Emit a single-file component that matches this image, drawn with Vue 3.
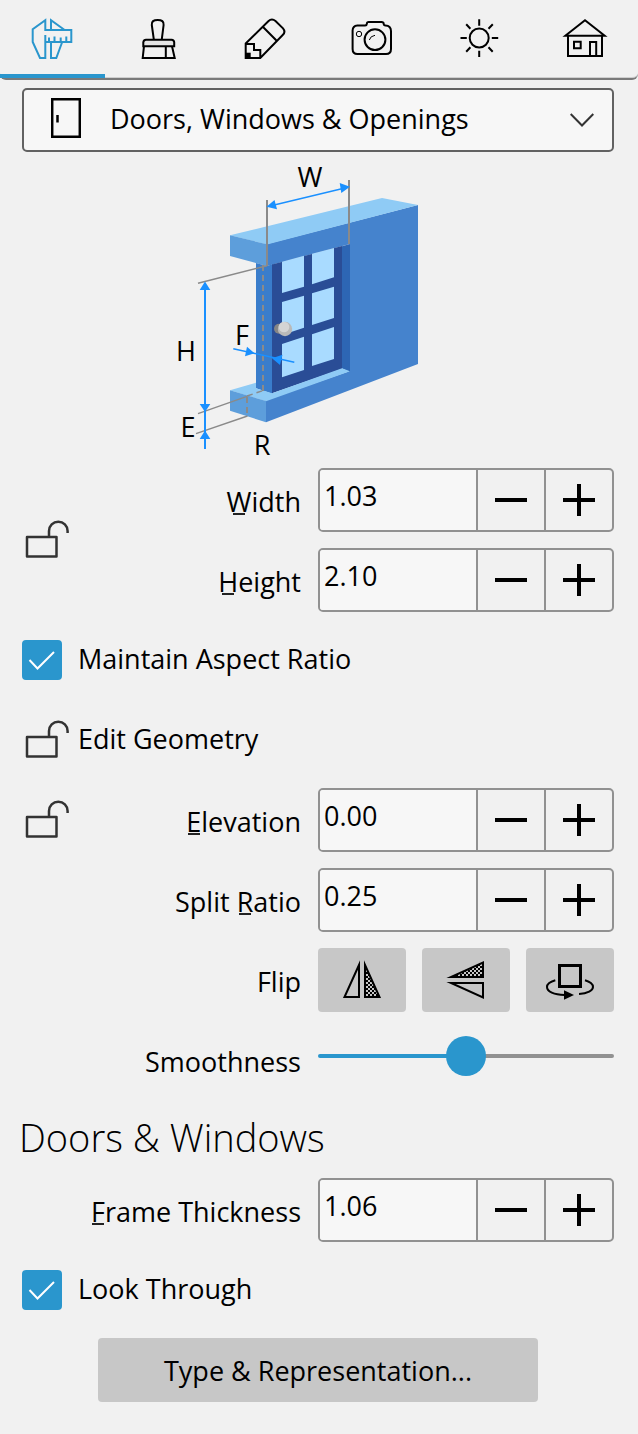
<script setup>
import { ref } from 'vue'

const tabs = ['Dimensions', 'Materials', 'Edit', 'Camera', 'Light', 'Building']
const active = ref(0)
const category = ref('Doors, Windows & Openings')
const maintainRatio = ref(true)
const lookThrough = ref(true)
const smoothness = ref(50)

const groups = ref([
  {
    name: 'size',
    lock: true,
    fields: [
      { id: 'width', pre: '', key: 'W', post: 'idth', value: '1.03' },
      { id: 'height', pre: '', key: 'H', post: 'eight', value: '2.10' },
    ],
  },
  {
    name: 'place',
    lock: true,
    fields: [
      { id: 'elevation', pre: '', key: 'E', post: 'levation', value: '0.00' },
      { id: 'split', pre: 'Split ', key: 'R', post: 'atio', value: '0.25' },
    ],
  },
  {
    name: 'frame',
    lock: false,
    fields: [{ id: 'frame', pre: '', key: 'F', post: 'rame Thickness', value: '1.06' }],
  },
])

function step(field, amount) {
  field.value = (Number(field.value) + amount).toFixed(2)
}
</script>

<template>
  <main class="panel">
    <nav class="tabs">
      <button
        v-for="(tab, i) in tabs"
        :key="tab"
        class="tab"
        :class="{ active: active === i }"
        :aria-label="tab"
        @click="active = i"
      >
        <svg class="tab-icon" viewBox="0 0 48 48" aria-hidden="true">
          <g v-if="i === 0">
            <path d="M16.3 20V43H11L3.7 27V14.3L16.3 5.3V15H42.3V27H16.3M22 15V5.3L35.3 14.7M22 27V43H27.3L33 27.5M20 27V22.5M25.5 27V21.5M31.7 27V22.5M37.3 27V21.5" />
          </g>
          <g v-else-if="i === 1">
            <path fill="#e4e4e4" d="M8.3 31.2V27.2Q8.8 24.8 11 24.8H36.5Q39 25 39.2 27.2V31.2Z" />
            <path d="M18.8 24.3L16.8 10C16.4 6.5 18.6 4.9 22.7 4.9S29 6.5 28.6 10L26.8 24.3M9 31.2L7.7 43H39.7L37 31.2M30.8 31.2V43" />
          </g>
          <g v-else-if="i === 2">
            <path d="M3.7 28.5L26.3 6.2Q29.8 3 33.5 6L41 13.4Q44 17 40.7 20L18.3 43H3.7ZM21.3 12.3L34.7 25.7M3.7 29H12V35H18.3V43" />
            <path class="solid" d="M3.7 37.7H8.7V43H3.7Z" />
          </g>
          <g v-else-if="i === 3">
            <path d="M9.3 10.6H17Q18.8 10.4 18.9 8.6T21 7H33.5Q35.6 7 35.7 8.8T37.5 10.6Q42.8 10.8 43 16V34Q43 39 38 39H9.5Q4.6 39 4.6 34V15.5Q4.8 11 9.3 10.6Z" />
            <circle cx="27" cy="24.7" r="10.4" />
            <circle class="fine" cx="11" cy="19" r="2.7" />
            <path class="fine" d="M21.3 25Q22.3 21 27 20.3" />
          </g>
          <g v-else-if="i === 4">
            <circle cx="25.2" cy="23" r="9.5" />
            <path d="M25.2 4.3V10.7M25.2 35.7V42M6.5 23H12.8M37.8 23H44.2M12.2 9.3L16.4 13.7M38.8 9.3L34.5 13.7M12.2 36.7L16.4 32.3M38.7 36.7L34.5 32.3" />
          </g>
          <g v-else>
            <path d="M4.3 20.7L24 5.2L43.7 20.7ZM7 20.7V41H41V20.7M13 26.7H19.7V33.3H13ZM29 41V27H35.2V41" />
          </g>
        </svg>
      </button>
    </nav>

    <div class="content">
      <div class="category">
        <select v-model="category" aria-label="Object category">
          <option>Doors, Windows &amp; Openings</option>
        </select>
        <svg class="door" viewBox="0 0 30 40" aria-hidden="true"><path d="M1.2 1.2H28.8V38.8H1.2ZM6.5 17V24.5" /></svg>
        <svg class="chevron" viewBox="0 0 24 14" aria-hidden="true"><path d="M.7 1L12 12.5L23.3 1" /></svg>
      </div>

      <svg class="diagram" viewBox="160 152 316 316" role="img" aria-label="Window dimensions">
        <path fill="#4583cd" d="M267 244L418 205V364L266 422.3V400L350 371V244L267 266Z" />
        <path fill="#8fcbf5" d="M230 235.3L382 198L418 205L267 244.5Z" />
        <path fill="#5d9edb" d="M230 235.3L267 244.3V266L230 256Z" />
        <path fill="#3a7dcb" d="M256 263L267 266L273 264V394L256 388.3Z" />
        <path fill="#2a4d96" d="M272 264.5L342 246V369L272 393.3Z" />
        <path fill="#2d66b4" d="M342 246.2L350 244V372L342 368.5Z" />
        <path fill="#a9dbff" d="M282 261.7L304 255.8V286.7L282 293ZM312 253.7L334 248V277.3L312 284.3ZM282 302L304 295.7V327.7L282 335ZM312 293.3L334 286.7V318L312 325ZM282 344L304 336.7V370L282 377.3ZM312 334.3L334 327V359L312 366Z" />
        <path fill="#8fcbf5" d="M230 390.3L256 382.7V388.3L272 393.3L342 368.3L350 371.3L266 401.2Z" />
        <path fill="#5d9edb" d="M230 390.3L266 401V422.3L230 410.7Z" />

        <g class="guide">
          <path d="M267 200V266M349 180V244" />
          <path class="thin" d="M198 283.3L267 265.7M198 413.7L247 396.3M196 433.7L247.5 416" />
          <path class="dashed" d="M263 265V391M247 397V416" />
          <path class="dashed thin" d="M247 396L263 390.5" />
        </g>

        <g class="arrow">
          <path d="M205 285V449" />
          <path class="thin" d="M270 206L347 187.5M233.3 348.7L294.3 362.3" />
          <path class="head" d="M205 281.5L210.3 290H199.7ZM205 412L210.3 404H199.7ZM205 430.5L210.3 439H199.7ZM266.5 206.8L274.5 200L277 209.3ZM350 186.7L339.7 183L341.3 193ZM254.5 353.3L247 346.7L245 356.3ZM272 358.3L282.5 354.7L280 365Z" />
        </g>

        <circle cx="279" cy="328.7" r="5" fill="#858585" />
        <circle cx="285" cy="329" r="7.2" fill="#b9b9b9" />
        <circle cx="284" cy="327" r="5.3" fill="#d4d4d4" />

        <g class="letters">
          <text x="310" y="187">W</text>
          <text x="186" y="361">H</text>
          <text x="242" y="345">F</text>
          <text x="188" y="437">E</text>
          <text x="262" y="455">R</text>
        </g>
      </svg>

      <template v-for="group in groups" :key="group.name">
        <h2 v-if="group.name === 'frame'" class="heading">Doors &amp; Windows</h2>

        <section class="group">
          <div class="rows">
            <div v-for="field in group.fields" :key="field.id" class="row">
              <label class="label" :for="field.id">{{ field.pre }}<span class="key">{{ field.key }}</span>{{ field.post }}</label>
              <div class="stepper">
                <input :id="field.id" v-model="field.value" type="text" inputmode="decimal" />
                <button :aria-label="'Decrease ' + field.id" @click="step(field, -0.01)">
                  <svg viewBox="0 0 32 32" aria-hidden="true"><path d="M0 16H32" /></svg>
                </button>
                <button :aria-label="'Increase ' + field.id" @click="step(field, 0.01)">
                  <svg viewBox="0 0 32 32" aria-hidden="true"><path d="M0 16H32M16 0V32" /></svg>
                </button>
              </div>
            </div>
          </div>
          <button v-if="group.lock" class="lock" :class="{ both: group.name === 'size' }" :aria-label="'Lock ' + group.name">
            <svg viewBox="0 0 48 48" aria-hidden="true"><path d="M5 21H34.5V40.5H5ZM27 21V15A9.3 9.3 0 0 1 45.6 15V17" /></svg>
          </button>
        </section>

        <template v-if="group.name === 'size'">
          <label class="check">
            <span class="box">
              <input v-model="maintainRatio" type="checkbox" />
              <svg v-if="maintainRatio" viewBox="0 0 40 40" aria-hidden="true"><path d="M7.5 20L15.5 28.5L32 12" /></svg>
            </span>
            <span class="check-text">Maintain Aspect Ratio</span>
          </label>
          <button class="geometry">
            <svg viewBox="0 0 48 48" aria-hidden="true"><path d="M5 21H34.5V40.5H5ZM27 21V15A9.3 9.3 0 0 1 45.6 15V17" /></svg>
            <span class="check-text">Edit Geometry</span>
          </button>
        </template>

        <template v-if="group.name === 'place'">
          <div class="row">
            <span class="label">Flip</span>
            <div class="flips">
              <button aria-label="Flip horizontally">
                <svg class="flip" viewBox="0 0 40 40" aria-hidden="true">
                  <defs>
                    <pattern id="checker" width="4" height="4" patternUnits="userSpaceOnUse">
                      <path class="solid" d="M0 0H2V2H0ZM2 2H4V4H2Z" />
                    </pattern>
                  </defs>
                  <path d="M17 5V37H2.5Z" />
                  <path class="checked" d="M23 5V37H37.5Z" />
                </svg>
              </button>
              <button aria-label="Flip vertically">
                <svg class="flip" viewBox="0 0 40 40" aria-hidden="true">
                  <path d="M5 23H37V37.5Z" />
                  <path class="checked" d="M5 17H37V2.5Z" />
                </svg>
              </button>
              <button aria-label="Rotate">
                <svg class="rotate" viewBox="0 0 56 40" aria-hidden="true">
                  <path class="square" d="M17.5 5.5H38.5V26.5H17.5Z" />
                  <path d="M13.3 20.3C8 21.8 5 24.2 5 27C5 31.6 12 34.7 22.5 35M43 20.3C48 21.8 51 24 51 27C51 30.3 45.5 33.5 37 34" />
                  <path class="solid" d="M22 30.3L32 35L22 39.8Z" />
                </svg>
              </button>
            </div>
          </div>
          <div class="row">
            <label class="label" for="smoothness">Smoothness</label>
            <div class="slider">
              <input id="smoothness" v-model="smoothness" type="range" min="0" max="100" :style="{ '--fill': smoothness + '%' }" />
            </div>
          </div>
        </template>
      </template>

      <label class="check">
        <span class="box">
          <input v-model="lookThrough" type="checkbox" />
          <svg v-if="lookThrough" viewBox="0 0 40 40" aria-hidden="true"><path d="M7.5 20L15.5 28.5L32 12" /></svg>
        </span>
        <span class="check-text">Look Through</span>
      </label>

      <button class="wide">Type &amp; Representation...</button>
    </div>
  </main>
</template>

<style>
body {
  background: #f1f1f1;
}
</style>

<style scoped>
.panel,
.panel * {
  box-sizing: border-box;
}
.panel {
  color: #000;
  font-family: "Open Sans", "Noto Sans", sans-serif;
  font-size: 27px;
  line-height: 36px;
}
button,
input,
select {
  margin: 0;
  padding: 0;
  border: 0;
  border-radius: 0;
  background: none;
  color: inherit;
  font: inherit;
}
svg {
  display: block;
  fill: none;
  stroke: #000;
  stroke-width: 2;
}
.tabs {
  display: grid;
  grid-template-columns: repeat(6, 1fr);
  height: 80px;
  border-bottom: 2px solid #7a7a7a;
  border-radius: 0 0 6px 6px;
  box-shadow: inset 0 -1px #cfcfcf;
}
.tab {
  display: grid;
  place-items: center;
  height: 78px;
}
.tab.active {
  position: relative;
}
.tab.active::after {
  content: "";
  position: absolute;
  left: 0;
  right: 1px;
  bottom: 0;
  height: 4px;
  background: #2a96cd;
}
.tab-icon {
  width: 48px;
  height: 48px;
}
.tab.active .tab-icon {
  stroke: #2a96cd;
}
.tab-icon .fine {
  stroke-width: 1;
}
.solid {
  fill: #000;
  stroke: none;
}
.content {
  display: flex;
  flex-direction: column;
  gap: 16px;
  padding: 8px 24px 32px 22px;
}
.category {
  position: relative;
}
.category select {
  display: block;
  appearance: none;
  width: 100%;
  height: 64px;
  padding: 0 60px 2px 86px;
  border: 2px solid #626262;
  border-radius: 5px;
  background: #f7f7f7;
}
.door,
.chevron {
  position: absolute;
  pointer-events: none;
}
.door {
  left: 29px;
  top: 10px;
  width: 30px;
  height: 40px;
  stroke-width: 2.5;
}
.chevron {
  right: 20px;
  top: 25px;
  width: 24px;
  height: 14px;
  stroke: #333;
}
.diagram {
  align-self: center;
  width: 316px;
  height: 316px;
  margin: -16px 0;
  stroke: none;
}
.guide {
  stroke: #8a8a8a;
  stroke-width: 2;
}
.guide .thin,
.arrow .thin {
  stroke-width: 1.4;
}
.guide .dashed {
  stroke-dasharray: 6 4;
}
.arrow {
  stroke: #1a90ff;
  stroke-width: 2;
}
.arrow .head {
  fill: #1a90ff;
  stroke: none;
}
.letters {
  fill: #000;
  text-anchor: middle;
}
.group {
  display: grid;
}
.rows {
  grid-area: 1 / 1;
  display: grid;
  row-gap: 16px;
}
.row {
  display: grid;
  grid-template-columns: 1fr 1fr;
  align-items: center;
  min-height: 64px;
}
.label {
  justify-self: end;
  padding: 4px 17px 0 0;
}
.key {
  position: relative;
}
.key::after {
  content: "";
  position: absolute;
  left: calc(50% - 6px);
  bottom: 5px;
  width: 12px;
  height: 2px;
  background: #222;
}
.lock {
  grid-area: 1 / 1;
  place-self: start;
  display: grid;
  align-items: center;
  height: 64px;
}
.lock.both {
  align-self: center;
}
.lock svg,
.geometry svg {
  width: 48px;
  height: 48px;
  stroke: #333;
  stroke-width: 2.5;
  stroke-linejoin: round;
}
.stepper {
  display: grid;
  grid-template-columns: 1fr 68px 68px;
  height: 64px;
  overflow: hidden;
  border: 2px solid #919191;
  border-radius: 5px;
}
.stepper input {
  min-width: 0;
  padding: 0 4px 8px;
  background: #f7f7f7;
}
.stepper button {
  display: grid;
  place-items: center;
  border-left: 2px solid #919191;
}
.stepper svg {
  width: 32px;
  height: 32px;
  stroke-width: 4;
}
.check,
.geometry {
  display: flex;
  align-items: center;
  align-self: flex-start;
  height: 64px;
}
.check {
  gap: 16px;
}
.geometry {
  gap: 8px;
}
.check-text {
  padding-bottom: 2px;
}
.box {
  display: grid;
}
.box input {
  grid-area: 1 / 1;
  appearance: none;
  width: 40px;
  height: 40px;
  border: 2px solid #2a96cd;
  border-radius: 4px;
}
.box input:checked {
  background: #2a96cd;
}
.box svg {
  grid-area: 1 / 1;
  width: 40px;
  height: 40px;
  stroke: #fff;
  pointer-events: none;
}
.flips {
  display: grid;
  grid-template-columns: repeat(3, 1fr);
  gap: 16px;
}
.flips button {
  display: grid;
  place-items: center;
  height: 64px;
  border-radius: 4px;
  background: #c7c7c7;
}
.flip {
  width: 40px;
  height: 40px;
  stroke-miterlimit: 10;
}
.flip .checked {
  fill: url(#checker);
}
.rotate {
  width: 56px;
  height: 40px;
}
.rotate .square {
  stroke-width: 3;
}
.slider {
  padding-bottom: 8px;
}
.slider input {
  display: block;
  appearance: none;
  width: 100%;
  height: 40px;
}
.slider input::-webkit-slider-runnable-track {
  height: 4px;
  border-radius: 2px;
  background: linear-gradient(to right, #2a96cd var(--fill), #919191 var(--fill));
}
.slider input::-webkit-slider-thumb {
  appearance: none;
  width: 40px;
  height: 40px;
  margin-top: -18px;
  border-radius: 50%;
  background: #2a96cd;
}
.heading {
  margin: 0 -3px;
  padding-top: 4px;
  font-size: 38px;
  font-weight: 300;
  line-height: 50px;
}
.wide {
  align-self: center;
  width: 440px;
  max-width: 100%;
  height: 64px;
  padding-top: 2px;
  border-radius: 4px;
  background: #c7c7c7;
}
</style>
